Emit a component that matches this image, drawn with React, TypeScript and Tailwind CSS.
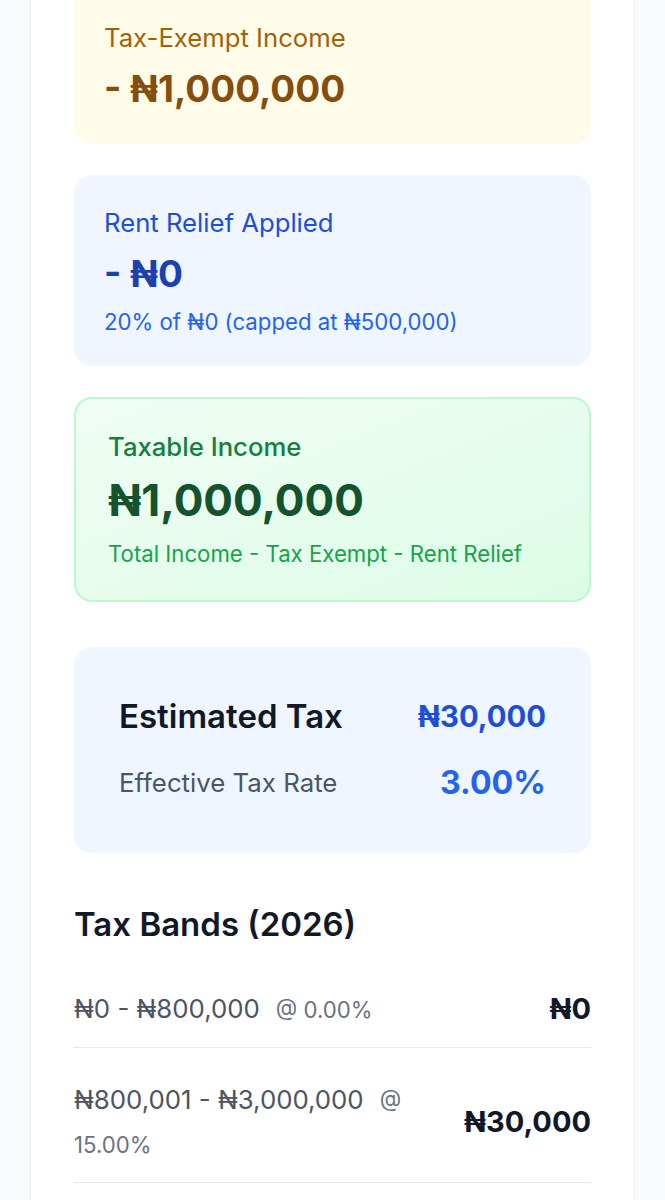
import React from 'react';

const bands = [
  { range: '₦0 - ₦800,000', rate: '0.00%', tax: '₦0' },
  { range: '₦800,001 - ₦3,000,000', rate: '15.00%', tax: '₦30,000' },
  { range: '₦3,000,001 - ₦12,000,000', rate: '18.00%', tax: '₦0' },
];

export default function App() {
  return (
    <div className="min-h-screen bg-[#f8fafc] px-[30px] font-['Inter',sans-serif]">
      <div className="bg-white border-x border-[#eceef2] px-[43px] pb-[60px]">
        {/* Tax exempt */}
        <div className="bg-[#fefce8] rounded-b-[18px] px-[30px] pt-[20px] pb-[31px]">
          <p className="text-[25.7px] leading-[36px] text-[#a16207]">Tax-Exempt Income</p>
          <p className="mt-[9px] text-[37px] leading-[48px] font-bold text-[#854d0e]">- ₦1,000,000</p>
        </div>

        {/* Rent relief */}
        <div className="mt-[31px] bg-[#eff6ff] rounded-[18px] px-[30px] pt-[30px] pb-[29px]">
          <p className="text-[25.7px] leading-[36px] text-[#1d4ed8]">Rent Relief Applied</p>
          <p className="mt-[9px] text-[37px] leading-[48px] font-bold text-[#1e40af]">- ₦0</p>
          <p className="mt-[9px] text-[22.2px] leading-[30px] text-[#2563eb]">20% of ₦0 (capped at ₦500,000)</p>
        </div>

        {/* Taxable income */}
        <div className="mt-[31px] rounded-[18px] border-2 border-[#bbf7d0] bg-gradient-to-br from-[#f0fdf4] to-[#dcfce7] px-[32px] pt-[30px] pb-[31px]">
          <p className="text-[25.7px] leading-[36px] font-medium text-[#15803d]">Taxable Income</p>
          <p className="mt-[8px] text-[44px] leading-[54px] font-bold text-[#14532d]">₦1,000,000</p>
          <p className="mt-[12px] text-[22.2px] leading-[30px] text-[#16a34a]">Total Income - Tax Exempt - Rent Relief</p>
        </div>

        {/* Summary */}
        <div className="mt-[45px] bg-[#eff6ff] rounded-[18px] px-[45px] py-[46px]">
          <div className="flex items-center justify-between h-[48px]">
            <span className="text-[33px] font-semibold text-[#111827]">Estimated Tax</span>
            <span className="text-[29.3px] font-bold text-[#1d4ed8]">₦30,000</span>
          </div>
          <div className="mt-[18px] flex items-center justify-between h-[48px]">
            <span className="text-[25.8px] text-[#4b5563]">Effective Tax Rate</span>
            <span className="text-[32.2px] font-bold text-[#2563eb]">3.00%</span>
          </div>
        </div>

        {/* Bands */}
        <h2 className="mt-[50px] text-[33px] leading-[42px] font-semibold text-[#111827]">Tax Bands (2026)</h2>
        <div className="mt-[12px]">
          {bands.map((b) => (
            <div key={b.range} className="flex items-center justify-between gap-[16px] border-b border-[#e5e7eb] pt-[30px] pb-[16px]">
              <div className="flex-1 text-[25.8px] leading-[44px] text-[#4b5563]">
                {b.range}
                <span className="ml-[16px] text-[22.2px] leading-none text-[#6b7280]">@ {b.rate}</span>
              </div>
              <span className="shrink-0 text-[29px] font-bold text-[#111827]">{b.tax}</span>
            </div>
          ))}
        </div>
      </div>
    </div>
  );
}
